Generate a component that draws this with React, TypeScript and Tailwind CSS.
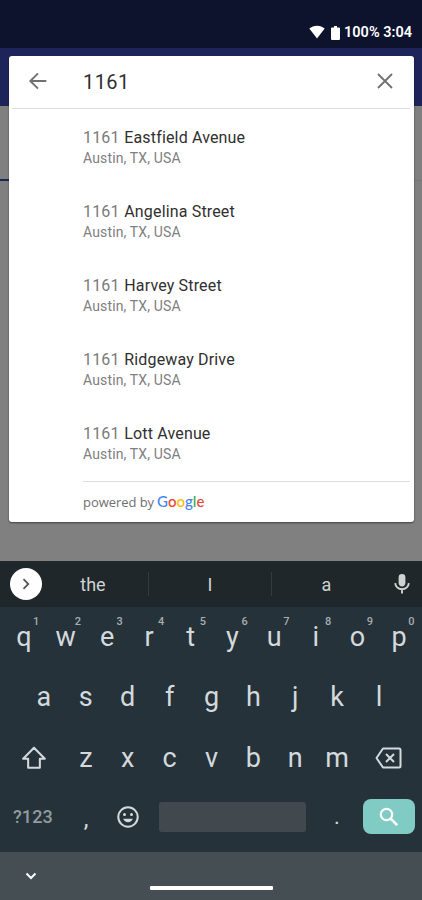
import type { ReactNode } from 'react'

const results = [
  'Eastfield Avenue',
  'Angelina Street',
  'Harvey Street',
  'Ridgeway Drive',
  'Lott Avenue',
]

const topRow = ['q', 'w', 'e', 'r', 't', 'y', 'u', 'i', 'o', 'p']
const homeRow = ['a', 's', 'd', 'f', 'g', 'h', 'j', 'k', 'l']
const bottomRow = ['z', 'x', 'c', 'v', 'b', 'n', 'm']

function Icon({ className, children }: { className: string; children: ReactNode }) {
  return (
    <svg className={className} viewBox="0 0 24 24" fill="none" stroke="currentColor" aria-hidden="true">
      {children}
    </svg>
  )
}

function StatusBar() {
  return (
    <div className="flex h-12 items-end justify-end bg-[#0e132d] pr-[10px] pb-[6px] text-white">
      <svg className="mb-[3px] h-[14px] w-4" viewBox="0 0 16 14" fill="currentColor" aria-hidden="true">
        <path d="M8 13.500 0.300 3.600C2.400 1.700 5 .7 8 .7s5.600 1 7.700 2.900z" />
      </svg>
      <svg className="mr-1 mb-[2px] ml-[6px] h-[14px] w-[9px]" viewBox="0 0 9 14" fill="currentColor" aria-hidden="true">
        <path d="M3 0h3v1.500h2q1 0 1 1V13q0 1-1 1H1q-1 0-1-1V2.500q0-1 1-1h2z" />
      </svg>
      <span className="text-[14.5px] leading-[18px] font-semibold whitespace-pre">100% 3:04</span>
    </div>
  )
}

function SearchCard() {
  return (
    <div className="relative mx-[8.5px] mt-2 h-[466px] rounded-[3px] bg-white shadow-[0_1px_2px_rgba(0,0,0,0.5)]">
      {/* Search field */}
      <div className="mx-[3.5px] flex h-[53px] items-center border-b border-[#dedede] text-[#707070]">
        <Icon className="mb-[2px] ml-[14px] h-6 w-6">
          <path d="M20.300 12H5M12 4.300 4.300 12l7.700 7.700" strokeWidth="1.900" />
        </Icon>
        <span className="ml-[33px] flex-1 text-[20px] leading-6 tracking-[0.4px] text-[#303030]">1161</span>
        <Icon className="mr-[13px] mb-[2px] h-6 w-6">
          <path d="m5 5 14 14M19 5 5 19" strokeWidth="1.800" />
        </Icon>
      </div>

      {/* Suggestions */}
      <ul className="pt-[19px] pl-[74.5px]">
        {results.map((street) => (
          <li key={street} className="h-[74px]">
            <p className="text-[16px] leading-5 tracking-[0.16px] text-[#303030]">
              <span className="mr-[0.5px] text-[#7a7a7a]">1161</span> {street}
            </p>
            <p className="text-[14px] leading-5 tracking-[0.15px] text-[#808080]">Austin, TX, USA</p>
          </li>
        ))}
      </ul>

      {/* Attribution */}
      <div className="mt-[-17px] mr-[3.5px] ml-[74.5px] flex items-baseline border-t border-[#dedede] pt-[9px] leading-5">
        <span className="font-['Open_Sans',sans-serif] text-[13px] tracking-[-0.05px] text-[#707070]">powered by</span>
        <span className="ml-[3px] font-['Lato',sans-serif] text-[15px] font-medium">
          <span className="text-[#4285f4]">G</span>
          <span className="text-[#ea4335]">o</span>
          <span className="text-[#fbbc05]">o</span>
          <span className="text-[#4285f4]">g</span>
          <span className="text-[#34a853]">l</span>
          <span className="text-[#ea4335]">e</span>
        </span>
      </div>
    </div>
  )
}

function Key({ label, hint }: { label: string; hint?: string }) {
  return (
    <div className="relative flex flex-1 items-center justify-center">
      {label}
      {hint && (
        <span className="absolute top-[9px] left-[30px] text-[11px] leading-3 font-medium text-[#a7adb1]">{hint}</span>
      )}
    </div>
  )
}

function Keyboard() {
  return (
    <div className="bg-[#263239] text-[#d3d9dc]">
      {/* Word suggestions */}
      <div className="flex h-[46px] items-center bg-[#20272a] text-[18px] text-[#cfd2d3]">
        <div className="ml-[10px] flex h-8 w-8 items-center justify-center rounded-full bg-white text-[#555]">
          <Icon className="h-6 w-6">
            <path d="m9.500 7.200 4.800 4.800-4.800 4.800" strokeWidth="1.800" />
          </Icon>
        </div>
        <span className="ml-[-4px] w-[110px] text-center">the</span>
        <span className="h-6 w-px bg-[#353c3f]" />
        <span className="w-[122px] text-center">I</span>
        <span className="h-6 w-px bg-[#353c3f]" />
        <span className="w-[109px] text-center">a</span>
        <svg className="ml-[9px] h-6 w-6" viewBox="0 0 24 24" fill="currentColor" aria-hidden="true">
          <path d="M12 14.500c1.900 0 3.400-1.500 3.400-3.400V5.400a3.400 3.400 0 0 0-6.800 0v5.700c0 1.900 1.500 3.400 3.400 3.400z" />
          <path d="M5.200 11.200c.3 3.700 3.200 6 6.800 6s6.500-2.300 6.800-6M12 17v4.500" fill="none" stroke="currentColor" strokeWidth="1.900" />
        </svg>
      </div>

      <div className="flex h-[60px] pr-[2px] pl-[3px] text-[27px]">
        {topRow.map((letter, i) => (
          <Key key={letter} label={letter} hint={String((i + 1) % 10)} />
        ))}
      </div>
      <div className="flex h-[60px] pr-[22px] pl-[23px] text-[27px]">
        {homeRow.map((letter) => (
          <Key key={letter} label={letter} />
        ))}
      </div>
      <div className="flex h-[61px] items-stretch pt-px text-[27px]">
        <div className="flex w-[65px] items-center justify-center pl-[3px]">
          <Icon className="h-[26px] w-[26px]">
            <path d="M12 2.500 2 12.700h4.600V21h10.800v-8.300H22z" strokeWidth="1.900" strokeLinejoin="round" />
          </Icon>
        </div>
        {bottomRow.map((letter) => (
          <Key key={letter} label={letter} />
        ))}
        <div className="flex w-[64px] items-center justify-center pr-[3px]">
          <svg className="h-[22px] w-[27px]" viewBox="0 0 27 22" fill="none" stroke="currentColor" strokeWidth="2" strokeLinejoin="round" aria-hidden="true">
            <path d="M8 1.500h16q1.500 0 1.500 1.500v16q0 1.500-1.500 1.500H8L1.500 11z" />
            <path d="m11 7 8 8m0-8-8 8" />
          </svg>
        </div>
      </div>

      {/* Space bar row */}
      <div className="flex h-[64px]">
        <span className="mt-[17px] ml-[13px] w-[44px] text-[18px] leading-[24px] font-medium tracking-[0.1px] text-[#929b9f]">?123</span>
        <span className="mt-[17px] ml-[18px] w-[22px] text-center text-[24px] leading-7">,</span>
        <Icon className="mt-[17px] ml-[19px] h-6 w-6">
          <circle cx="12" cy="12" r="9.700" strokeWidth="2" />
          <circle cx="8.500" cy="9.500" r="1.500" fill="currentColor" stroke="none" />
          <circle cx="15.500" cy="9.500" r="1.500" fill="currentColor" stroke="none" />
          <path d="M7.200 13.800h9.600c-.8 2-2.600 3.400-4.800 3.400s-4-1.400-4.800-3.400z" fill="currentColor" stroke="none" />
        </Icon>
        <span className="mt-[14px] ml-[19px] h-[30px] w-[147px] rounded-[3px] bg-[#41494f]" />
        <span className="mt-[15px] ml-5 w-[22px] text-center text-[22px] leading-7">.</span>
        <div className="mt-[11px] ml-[15px] flex h-[35px] w-[52px] items-center justify-center rounded-[8px] bg-[#80cbc4] text-white">
          <Icon className="h-6 w-6">
            <circle cx="9.500" cy="9.500" r="5.700" strokeWidth="2.200" />
            <path d="m13.700 13.700 6.500 6.500" strokeWidth="2.600" />
          </Icon>
        </div>
      </div>
    </div>
  )
}

export default function App() {
  return (
    <div className="relative h-[900px] w-full overflow-hidden bg-[#808080] font-['Roboto',sans-serif]">
      <StatusBar />

      {/* Dimmed screen with the autocomplete dialog on top of it */}
      <div className="relative flex h-[513px] flex-col">
        <div className="absolute inset-0">
          <div className="h-[58px] bg-[#1d2459]" />
          <div className="flex h-[75px] items-end">
            <div className="h-[2px] flex-1 bg-[#1d2459]" />
            <div className="h-px flex-1 bg-[#777]" />
          </div>
        </div>
        <SearchCard />
      </div>

      <Keyboard />

      {/* Navigation bar */}
      <div className="relative flex h-12 items-center bg-[#454e53] text-white">
        <Icon className="ml-[19px] h-6 w-6">
          <path d="m7.500 9.500 4.500 4.500 4.500-4.500" strokeWidth="2" />
        </Icon>
        <div className="mt-6 ml-[107px] h-1 w-[123px] rounded-[1px] bg-white" />
      </div>
    </div>
  )
}
